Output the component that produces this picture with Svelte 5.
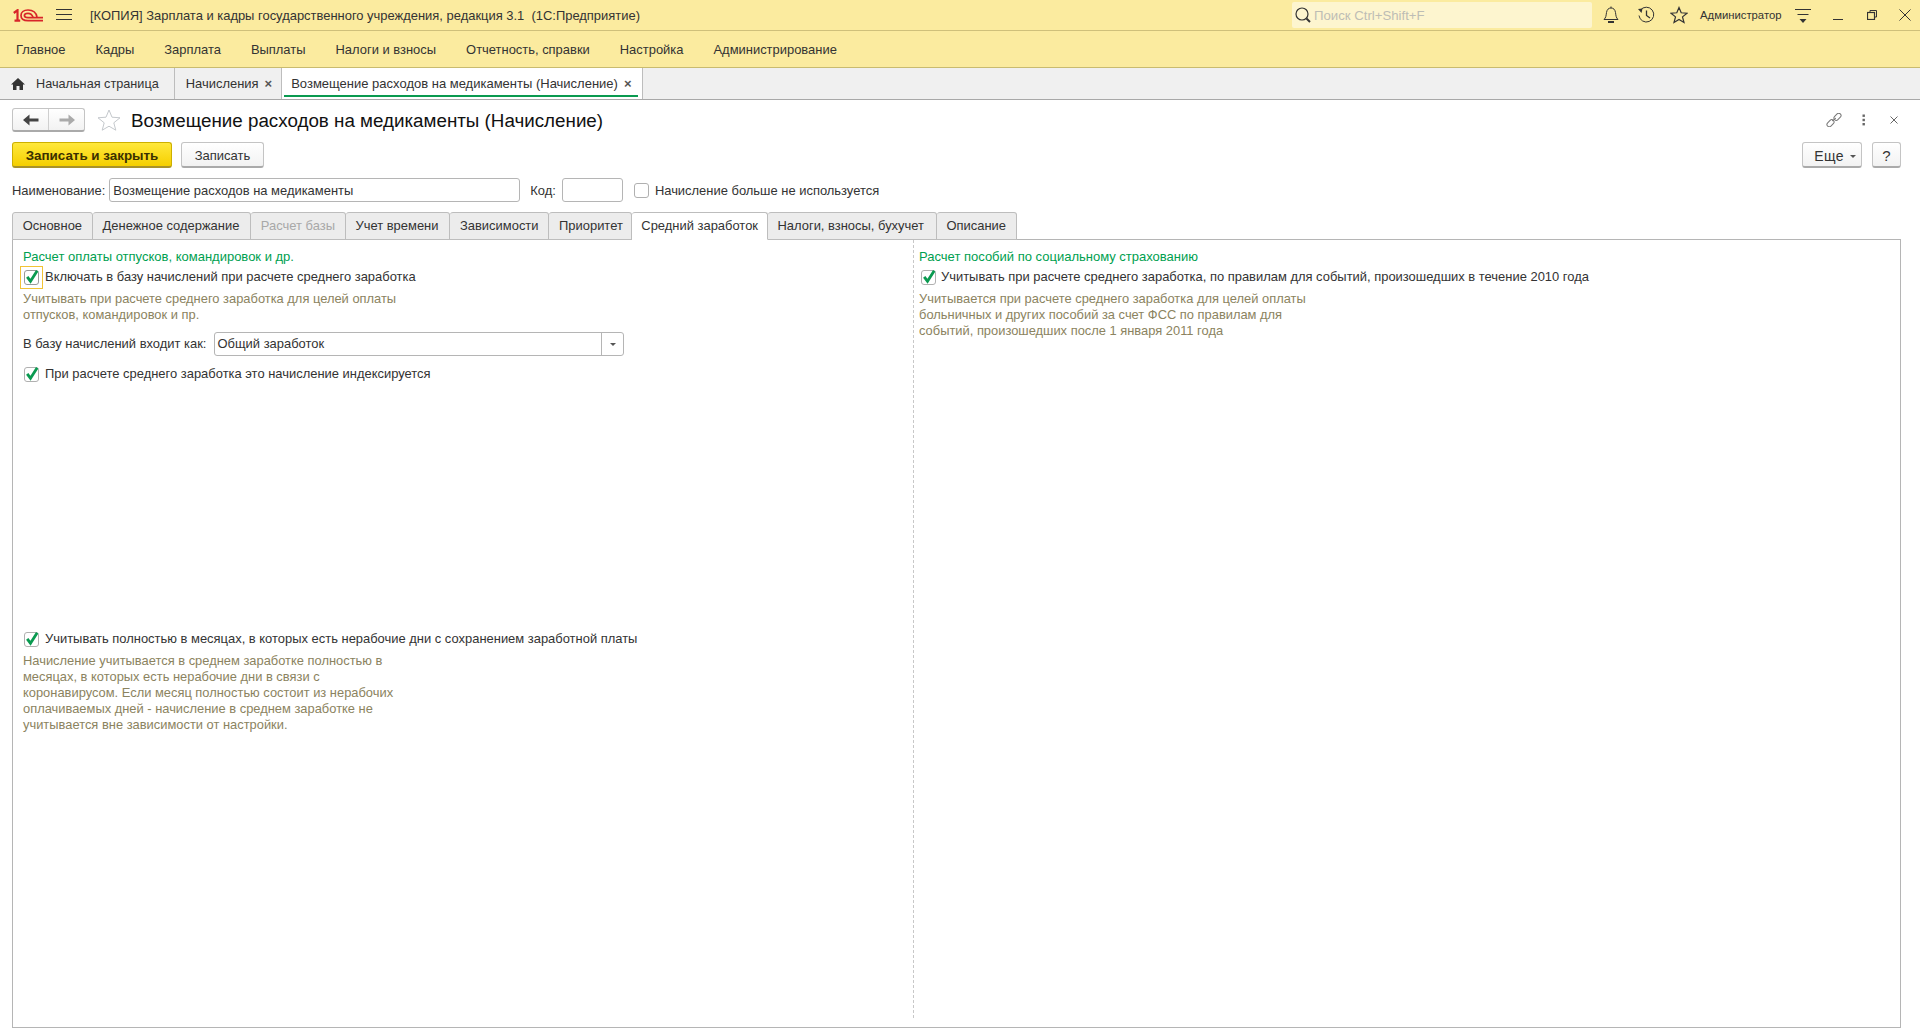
<script>
  const nav = ['Главное','Кадры','Зарплата','Выплаты','Налоги и взносы','Отчетность, справки','Настройка','Администрирование'];
  const tabs = [
    {t:'Основное'},{t:'Денежное содержание'},{t:'Расчет базы',off:true},{t:'Учет времени'},{t:'Зависимости'},{t:'Приоритет'},{t:'Средний заработок',on:true},{t:'Налоги, взносы, бухучет'},{t:'Описание'}
  ];
</script>

{#snippet check()}
  <span class="cb"><svg width="16" height="16" viewBox="0 0 16 16"><path d="M3.2 7.8 L6.5 12.2 L13.2 1.8" fill="none" stroke="#0a9a50" stroke-width="2.8"/></svg></span>
{/snippet}

<div class="app">
  <header class="titlebar">
    <svg class="logo" width="30" height="13" viewBox="0 0 30 13" fill="none" stroke="#d8252a">
      <path d="M0.8 4 L4.5 1.2 V12 M1.5 11.6 H7.2" stroke-width="2.2"/>
      <path d="M24 8 C23 3 19 1 15 1 C10.5 1 8 3.5 8 6.5 C8 9.5 10.5 11.7 15 11.7 H30" stroke-width="1.7"/>
      <path d="M20 8 C19 5.5 17 4.3 15 4.3 C12.5 4.3 11.4 5.3 11.4 6.5 C11.4 7.8 13 8.6 15 8.6 H30" stroke-width="1.7"/>
    </svg>
    <svg class="burger" width="16" height="14" viewBox="0 0 16 14" stroke="#333" stroke-width="1"><path d="M0 1.5H16M0 6.5H16M0 11.5H16"/></svg>
    <div class="apptitle">[КОПИЯ] Зарплата и кадры государственного учреждения, редакция 3.1&nbsp; (1С:Предприятие)</div>
    <div class="search">
      <svg width="18" height="18" viewBox="0 0 18 18" fill="none" stroke="#333"><circle cx="8" cy="8" r="6" stroke-width="1.2"/><path d="M12.5 12.5 L16 16" stroke-width="2"/></svg>
      <span>Поиск Ctrl+Shift+F</span>
    </div>
    <div class="ticons">
      <svg class="i-bell" width="16" height="18" viewBox="0 0 16 18" fill="none" stroke="#333"><path d="M1 13.5 H15 C13 11.5 13 10 12.5 6.5 C12 3.5 10.5 2 8 2 C5.5 2 4 3.5 3.5 6.5 C3 10 3 11.5 1 13.5Z"/><path d="M8 0.5V2" /><path d="M5 16 H11" stroke-width="2"/></svg>
      <svg class="i-hist" width="18" height="18" viewBox="0 0 18 18" fill="none" stroke="#333"><path d="M3.4 4.2 A7.4 7.4 0 1 1 2 9.5"/><path d="M1 3 L5.5 2.5 L4.5 7Z" fill="#333" stroke="none"/><path d="M9.5 4.5 V9.5 L13 12" stroke-width="1.3"/></svg>
      <svg class="i-star" width="18" height="18" viewBox="0 0 18 18" fill="none" stroke="#333" stroke-width="1.2"><path d="M9 1.5 L11.2 6.8 L17 7.2 L12.5 10.9 L14 16.5 L9 13.4 L4 16.5 L5.5 10.9 L1 7.2 L6.8 6.8Z"/></svg>
      <span class="user">Администратор</span>
      <svg class="i-menu" width="16" height="16" viewBox="0 0 16 16" stroke="#333"><path d="M0 1.5H16M2.5 6.5H13.5"/><path d="M4.5 11H11.5L8 15Z" fill="#333" stroke="none"/></svg>
      <svg class="i-min" width="10" height="10" viewBox="0 0 10 10" stroke="#333"><path d="M0 9.5H10"/></svg>
      <svg class="i-rest" width="10" height="10" viewBox="0 0 10 10" fill="none" stroke="#333"><path d="M3 2.5V0.5H9.5V7H7.5"/><rect x="0.5" y="2.5" width="7" height="7" stroke-width="1.2"/></svg>
      <svg class="i-close" width="12" height="12" viewBox="0 0 12 12" stroke="#333"><path d="M0.5 0.5L11.5 11.5M11.5 0.5L0.5 11.5"/></svg>
    </div>
  </header>

  <nav class="mainnav">
    {#each nav as n}<span>{n}</span>{/each}
  </nav>

  <div class="opentabs">
    <div class="ot ot-home">
      <svg width="14" height="12" viewBox="0 0 14 12" fill="#333"><path d="M7 0 L14 6.5 H12 V12 H8.5 V8 H5.5 V12 H2 V6.5 H0Z"/></svg>
      <span>Начальная страница</span>
    </div>
    <div class="ot"><span>Начисления</span><i>×</i></div>
    <div class="ot ot-on"><span>Возмещение расходов на медикаменты (Начисление)</span><i>×</i></div>
  </div>

  <main class="form">
    <div class="headrow">
      <div class="navbtns">
        <button aria-label="Назад"><svg width="16" height="12" viewBox="0 0 16 12" fill="#444"><path d="M0 6 L6.5 0.5 V4.5 H15.5 V7.5 H6.5 V11.5Z"/></svg></button>
        <button aria-label="Вперед"><svg width="16" height="12" viewBox="0 0 16 12" fill="#aaa"><path d="M16 6 L9.5 0.5 V4.5 H0.5 V7.5 H9.5 V11.5Z"/></svg></button>
      </div>
      <svg class="bigstar" width="24" height="22" viewBox="0 0 24 22" fill="none" stroke="#c4c8cc"><path d="M12 1 L15 8.2 L23 8.8 L16.8 13.8 L18.8 21.2 L12 17.2 L5.2 21.2 L7.2 13.8 L1 8.8 L9 8.2Z"/></svg>
      <h1>Возмещение расходов на медикаменты (Начисление)</h1>
      <div class="headicons">
        <svg width="16" height="14" viewBox="0 0 16 14" fill="none" stroke="#777"><rect x="7.5" y="1.5" width="8" height="4.6" rx="2.3" transform="rotate(-45 11.5 3.8)"/><rect x="0.5" y="7.9" width="8" height="4.6" rx="2.3" transform="rotate(-45 4.5 10.2)"/><path d="M6 8 L10 5"/></svg>
        <svg width="4" height="12" viewBox="0 0 4 12" fill="#666"><rect x="0.5" y="0.5" width="2.4" height="2.4"/><rect x="0.5" y="4.8" width="2.4" height="2.4"/><rect x="0.5" y="9" width="2.4" height="2.4"/></svg>
        <svg class="hx" width="8" height="8" viewBox="0 0 8 8" stroke="#666"><path d="M0.5 0.5L7.5 7.5M7.5 0.5L0.5 7.5"/></svg>
      </div>
    </div>

    <div class="cmdrow">
      <button class="btn primary">Записать и закрыть</button>
      <button class="btn save">Записать</button>
      <div class="spacer"></div>
      <button class="btn more">Еще<b class="caret"></b></button>
      <button class="btn help">?</button>
    </div>

    <div class="namerow">
      <label for="nm">Наименование:</label>
      <input id="nm" class="f-name" value="Возмещение расходов на медикаменты" />
      <label for="cd" class="l-code">Код:</label>
      <input id="cd" class="f-code" />
      <span class="cb empty"></span>
      <span class="l-unused">Начисление больше не используется</span>
    </div>

    <div class="tabs">
      {#each tabs as t}
        <div class="tab" class:on={t.on} class:off={t.off}>{t.t}</div>
      {/each}
    </div>

    <section class="panel">
      <div class="col left">
        <div class="head">Расчет оплаты отпусков, командировок и др.</div>
        <div class="chk first"><span class="focus">{@render check()}</span><span>Включать в базу начислений при расчете среднего заработка</span></div>
        <div class="hint h1">Учитывать при расчете среднего заработка для целей оплаты<br>отпусков, командировок и пр.</div>
        <div class="comborow">
          <span>В базу начислений входит как:</span>
          <div class="combo"><span>Общий заработок</span><em><b class="caret"></b></em></div>
        </div>
        <div class="chk idx">{@render check()}<span>При расчете среднего заработка это начисление индексируется</span></div>
        <div class="chk covid">{@render check()}<span>Учитывать полностью в месяцах, в которых есть нерабочие дни с сохранением заработной платы</span></div>
        <div class="hint h2">Начисление учитывается в среднем заработке полностью в<br>месяцах, в которых есть нерабочие дни в связи с<br>коронавирусом. Если месяц полностью состоит из нерабочих<br>оплачиваемых дней - начисление в среднем заработке не<br>учитывается вне зависимости от настройки.</div>
      </div>
      <div class="col right">
        <div class="head">Расчет пособий по социальному страхованию</div>
        <div class="chk first">{@render check()}<span>Учитывать при расчете среднего заработка, по правилам для событий, произошедших в течение 2010 года</span></div>
        <div class="hint h1">Учитывается при расчете среднего заработка для целей оплаты<br>больничных и других пособий за счет ФСС по правилам для<br>событий, произошедших после 1 января 2011 года</div>
      </div>
    </section>
  </main>
</div>

<style>
  :global(body) { margin: 0; background: #fff; }
  .app { width: 1920px; height: 1033px; overflow: hidden; font: 12.95px/16px "Liberation Sans", Arial, sans-serif; color: #333; display: flex; flex-direction: column; }
  .titlebar { height: 30px; flex: none; display: flex; align-items: center; background: #fbeb9f; border-bottom: 1px solid #cfc07a; }
  .logo { margin-left: 13px; flex: none; }
  .burger { margin-left: 13px; flex: none; }
  .apptitle { margin-left: 18px; width: 1202px; flex: none; white-space: nowrap; padding-top: 2px; }
  .search { width: 300px; height: 26px; flex: none; box-sizing: border-box; background: #fdf5cf; border-radius: 2px; display: flex; align-items: center; gap: 2px; padding-left: 2px; color: #bdbdb5; }
  .search span { padding-top: 2px; font-size: 13.2px; }
  .ticons { position: relative; flex: 1; height: 30px; }
  .ticons > * { position: absolute; }
  .i-bell { left: 11px; top: 6px; }
  .i-hist { left: 45px; top: 6px; }
  .i-star { left: 78px; top: 6px; }
  .user { left: 108px; top: 7px; font-size: 11.3px; white-space: nowrap; }
  .i-menu { left: 203px; top: 8px; }
  .i-min { left: 241px; top: 10px; }
  .i-rest { left: 275px; top: 10px; }
  .i-close { left: 307px; top: 9px; }

  .mainnav { height: 36px; flex: none; display: flex; align-items: center; gap: 30px; padding-left: 16px; background: #fbeb9f; border-bottom: 1px solid #c9bb6f; }
  .mainnav span { padding-top: 2px; }

  .opentabs { height: 31px; flex: none; display: flex; background: #f0f0f0; border-bottom: 1px solid #a8a8a8; }
  .ot { display: flex; align-items: center; padding: 0 9px 0 11px; border-right: 1px solid #bdbdbd; position: relative; white-space: nowrap; }
  .ot span { padding-top: 1px; }
  .ot i { font-style: normal; font-weight: bold; margin-left: 6px; font-size: 13px; color: #555; }
  .ot-home { padding: 0 15px 0 11px; gap: 11px; font-size: 12.7px; }
  .ot-on { background: #fff; padding: 0 10px 0 9px; font-size: 13px; }
  .ot-on::after { content: ''; position: absolute; left: 2px; right: 4px; bottom: 2px; height: 2px; background: #0a9a50; }

  .form { flex: 1; display: flex; flex-direction: column; padding: 8px 19px 5px 12px; min-height: 0; }
  .headrow { height: 24px; display: flex; align-items: center; flex: none; }
  .navbtns { display: flex; width: 73px; height: 24px; box-sizing: border-box; border: 1px solid #c4c4c4; border-bottom: 2px solid #aaa; border-radius: 3px; background: linear-gradient(#fff, #f2f2f2); }
  .navbtns button { flex: 1; border: 0; background: none; padding: 0; display: flex; align-items: center; justify-content: center; }
  .navbtns button + button { border-left: 1px solid #cfcfcf; }
  .bigstar { margin-left: 12px; }
  h1 { margin: 0 0 0 10px; padding-top: 2px; font: 18.8px/24px "Liberation Sans", Arial, sans-serif; color: #111; white-space: nowrap; }
  .headicons { margin-left: auto; display: flex; align-items: center; margin-right: 3px; gap: 20px; }
  .hx { margin-left: 4px; }

  .cmdrow { height: 26px; margin-top: 10px; flex: none; display: flex; align-items: stretch; }
  .btn { font: 13px "Liberation Sans", Arial, sans-serif; color: #333; box-sizing: border-box; border: 1px solid #c4c4c4; border-bottom: 2px solid #aaa; border-radius: 3px; background: linear-gradient(#fff, #f2f2f2); padding: 2px 0 0; }
  .primary { width: 160px; background: linear-gradient(#ffe83c, #f5cf00); border-color: #cdb000; border-bottom-color: #a8922a; font-weight: bold; font-size: 13.4px; color: #3a3000; }
  .save { width: 83px; margin-left: 9px; }
  .spacer { flex: 1; }
  .more { width: 60px; font-size: 14px; letter-spacing: .4px; padding-left: 6px; }
  .help { width: 29px; margin-left: 10px; font-size: 15px; }
  .caret { display: inline-block; width: 0; height: 0; border: 3px solid transparent; border-top: 3px solid #555; border-bottom: 0; vertical-align: middle; margin-left: 6px; }

  .namerow { height: 24px; margin-top: 10px; flex: none; display: flex; align-items: center; white-space: nowrap; }
  .namerow label, .l-unused { padding-top: 2px; }
  input { box-sizing: border-box; height: 24px; border: 1px solid #b5b5b5; border-radius: 3px; font: 12.95px "Liberation Sans", Arial, sans-serif; color: #333; padding: 0 3px; background: #fff; outline: none; }
  .f-name { width: 411px; margin-left: 4px; }
  .l-code { margin-left: 10px; }
  .f-code { width: 61px; margin-left: 6px; }
  .cb { display: inline-block; position: relative; width: 15px; height: 15px; box-sizing: border-box; border: 1px solid #b0b0b0; border-radius: 3px; background: #fff; flex: none; }
  .cb svg { position: absolute; left: -1px; top: -2px; }
  .cb.empty { margin-left: 11px; }
  .l-unused { margin-left: 6px; }

  .tabs { display: flex; margin-top: 10px; height: 27px; flex: none; position: relative; z-index: 1; }
  .tab { height: 28px; box-sizing: border-box; padding: 5px 9.75px 0; background: #ececec; border: 1px solid #bdbdbd; border-left: 0; border-radius: 3px 3px 0 0; white-space: nowrap; }
  .tab:first-child { border-left: 1px solid #bdbdbd; }
  .tab:nth-child(2), .tab:nth-child(4) { padding-right: 10.75px; }
  .tab:nth-child(6) { padding-right: 7.75px; }
  .tab:nth-child(7) { padding-right: 8.75px; }
  .tab:nth-child(8) { padding-right: 11.75px; }
  .tab.off { color: #a8a8a8; }
  .tab.on { background: #fff; border-bottom-color: #fff; }

  .panel { flex: 1; display: grid; grid-template-columns: 900px 1fr; border: 1px solid #b5b5b5; min-height: 0; }
  .col { position: relative; min-width: 0; padding-top: 9px; }
  .left { padding-left: 10px; }
  .right { padding-left: 5px; margin-bottom: 9px; border-left: 1px dashed #c8c8c8; }
  .head { color: #00a04f; height: 16px; font-size: 13px; }
  .chk { display: flex; align-items: center; gap: 6px; height: 16px; white-space: nowrap; }
  .left .chk { padding-left: 1px; }
  .chk.first { margin-top: 4px; }
  .right .chk { padding-left: 2px; gap: 5px; }
  .focus { display: block; outline: 1px solid #f2c335; outline-offset: 3px; height: 15px; }
  .focus .cb { display: block; border-color: #999; }
  .hint { color: #8b8360; font-size: 12.9px; }
  .h1 { margin-top: 6px; }
  .comborow { display: flex; align-items: center; gap: 8px; margin-top: 9px; height: 24px; white-space: nowrap; }
  .combo { width: 410px; height: 24px; box-sizing: border-box; border: 1px solid #b5b5b5; border-radius: 3px; display: flex; align-items: center; justify-content: space-between; padding-left: 2px; }
  .combo em { width: 21px; height: 100%; border-left: 1px solid #b5b5b5; display: flex; align-items: center; justify-content: center; }
  .combo .caret { margin: 0; }
  .chk.idx { margin-top: 10px; }
  .chk.covid { margin-top: 249px; }
  .h2 { margin-top: 6px; }
</style>
